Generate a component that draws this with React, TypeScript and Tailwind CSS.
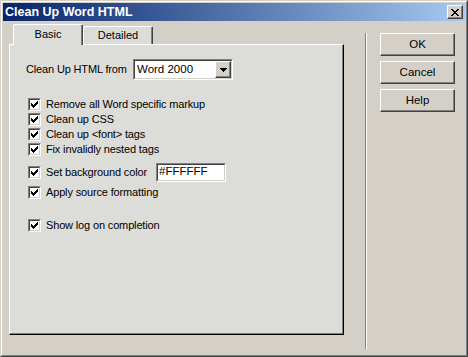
import React from "react";

const font = { fontFamily: '"Liberation Sans", Arial, sans-serif' };

function CheckBox() {
  return (
    <div className="w-[13px] h-[13px] shrink-0 border border-t-[#808080] border-l-[#808080] border-r-white border-b-white">
      <div className="w-[11px] h-[11px] bg-white border border-t-[#404040] border-l-[#404040] border-r-[#d4d0c8] border-b-[#d4d0c8] flex items-center justify-center">
        <svg width="7" height="7" viewBox="0 0 7 7" shapeRendering="crispEdges">
          <path d="M0 2h1v3h-1zM1 3h1v3h-1zM2 4h1v3h-1zM3 3h1v3h-1zM4 2h1v3h-1zM5 1h1v3h-1zM6 0h1v3h-1z" fill="#000" />
        </svg>
      </div>
    </div>
  );
}

function Row({ label, className = "" }: { label: string; className?: string }) {
  return (
    <div className={`flex items-center h-[15px] ml-[18px] ${className}`}>
      <CheckBox />
      <span className="ml-[5px] text-[11px] text-black leading-none whitespace-nowrap tracking-[-0.15px]">{label}</span>
    </div>
  );
}

function Button({ label }: { label: string }) {
  return (
    <div className="w-[75px] h-[23px] border border-t-white border-l-white border-r-[#404040] border-b-[#404040] shadow-[inset_-1px_-1px_#808080] flex items-center justify-center text-[11.5px] text-black">
      {label}
    </div>
  );
}

export default function App() {
  return (
    <div style={font} className="w-[468px] h-[357px] bg-[#d4d0c8] border border-t-[#d4d0c8] border-l-[#d4d0c8] border-r-[#404040] border-b-[#404040]">
      <div className="w-full h-full border border-t-white border-l-white border-r-[#808080] border-b-[#808080] p-px flex flex-col">
        {/* title bar */}
        <div className="h-[18px] shrink-0 flex items-center justify-between bg-gradient-to-r from-[#0a246a] to-[#a6caf0] pl-[2px] pr-[2px]">
          <span className="text-white text-[12.5px] font-bold leading-none">Clean Up Word HTML</span>
          <div className="w-[16px] h-[14px] bg-[#d4d0c8] border border-t-white border-l-white border-r-[#404040] border-b-[#404040] shadow-[inset_-1px_-1px_#808080] flex items-center justify-center">
            <svg width="8" height="7" viewBox="0 0 8 7" shapeRendering="crispEdges">
              <path d="M0 0h2v1h-2zM6 0h2v1h-2zM1 1h2v1h-2zM5 1h2v1h-2zM2 2h4v1h-4zM3 3h2v1h-2zM2 4h4v1h-4zM1 5h2v1h-2zM5 5h2v1h-2zM0 6h2v1h-2zM6 6h2v1h-2z" fill="#000" />
            </svg>
          </div>
        </div>

        <div className="flex flex-1">
          {/* left: tabs + panel */}
          <div className="pl-[6px] pt-[3px] flex flex-col">
            <div className="flex items-end h-[20px] pl-[4px]">
              <div className="relative z-10 w-[70px] h-[21px] -mb-px bg-[#dcddd9] border-t border-l border-r border-t-white border-l-white border-r-[#404040] shadow-[inset_-1px_0_#808080] rounded-tl-[2px] rounded-tr-[2px] flex items-center justify-center text-[11px] text-black pb-[1px]">
                Basic
              </div>
              <div className="w-[70px] h-[18px] bg-[#dcddd9] border-t border-l border-r border-t-white border-l-white border-r-[#404040] shadow-[inset_-1px_0_#808080] rounded-tl-[2px] rounded-tr-[2px] flex items-center justify-center text-[11px] text-black">
                Detailed
              </div>
            </div>
            <div className="w-[335px] h-[291px] bg-[#dcddd9] border border-t-white border-l-white border-r-[#000] border-b-[#000] shadow-[inset_-1px_-1px_#808080] flex flex-col">
              <div className="flex items-center mt-[14px] ml-[16px] h-[21px]">
                <span className="w-[107px] text-[11px] text-black whitespace-nowrap tracking-[-0.15px]">Clean Up HTML from</span>
                <div className="w-[100px] h-[21px] border border-t-[#808080] border-l-[#808080] border-r-white border-b-white">
                  <div className="w-full h-full bg-white border border-t-[#404040] border-l-[#404040] border-r-[#d4d0c8] border-b-[#d4d0c8] flex items-center">
                    <span className="flex-1 pl-[2px] text-[11.5px] text-black">Word 2000</span>
                    <div className="w-[16px] h-[17px] bg-[#d4d0c8] border border-t-white border-l-white border-r-[#404040] border-b-[#404040] shadow-[inset_-1px_-1px_#808080] flex items-center justify-center">
                      <svg width="7" height="4" viewBox="0 0 7 4" shapeRendering="crispEdges">
                        <path d="M0 0h7v1h-7zM1 1h5v1h-5zM2 2h3v1h-3zM3 3h1v1h-1z" fill="#000" />
                      </svg>
                    </div>
                  </div>
                </div>
              </div>

              <Row label="Remove all Word specific markup" className="mt-[17px]" />
              <Row label="Clean up CSS" />
              <Row label="Clean up <font> tags" />
              <Row label="Fix invalidly nested tags" />

              <div className="flex items-center h-[20px] ml-[18px] mt-[5px]">
                <CheckBox />
                <span className="ml-[5px] w-[110px] text-[11px] text-black leading-none whitespace-nowrap tracking-[-0.15px]">Set background color</span>
                <div className="w-[70px] h-[19px] border border-t-[#808080] border-l-[#808080] border-r-white border-b-white">
                  <div className="w-full h-full bg-white border border-t-[#404040] border-l-[#404040] border-r-[#d4d0c8] border-b-[#d4d0c8] flex items-center pl-[1px] text-[11.5px] text-black">
                    #FFFFFF
                  </div>
                </div>
              </div>
              <Row label="Apply source formatting" className="mt-[3px]" />
              <Row label="Show log on completion" className="mt-[18px]" />
            </div>
          </div>

          {/* separator */}
          <div className="ml-[21px] mt-[12px] w-[2px] h-[316px] border-l border-r border-l-[#808080] border-r-white" />

          {/* buttons */}
          <div className="ml-[13px] mt-[12px] flex flex-col gap-[5px]">
            <Button label="OK" />
            <Button label="Cancel" />
            <Button label="Help" />
          </div>
        </div>
      </div>
    </div>
  );
}
